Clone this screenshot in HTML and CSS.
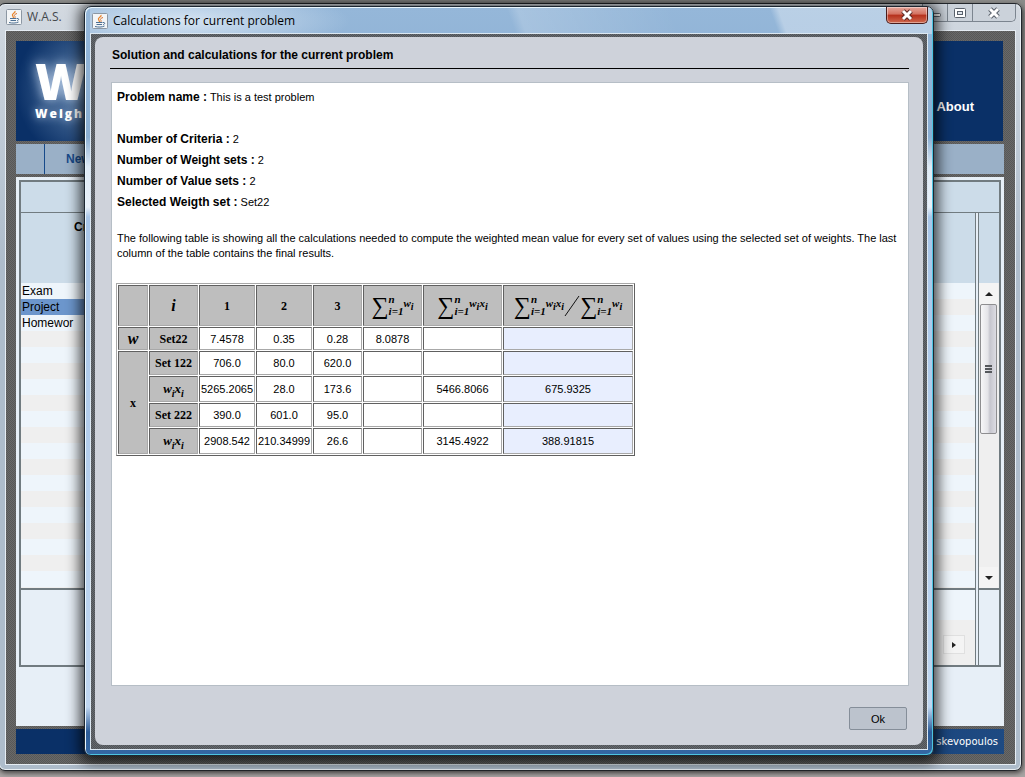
FILE: index.html
```html
<!DOCTYPE html>
<html lang="en">
<head>
  <meta charset="UTF-8">
  <meta name="viewport" content="width=device-width, initial-scale=1.0">
  <title>W.A.S.</title>
  <link rel="stylesheet" href="styles.css">
</head>
<body>

  <!-- java cup, used by both title bars -->
  <svg class="defs" width="0" height="0" aria-hidden="true">
    <symbol id="java" viewBox="0 0 16 16">
      <rect x="0.5" y="0.5" width="15" height="15" rx="1" fill="#f3f5f7" stroke="#8c97a3"/>
      <path d="M9 2 C10 4 5.500 4.500 6.500 6.500 C7 7.500 7.500 8 7.500 9" fill="none" stroke="#e8862e" stroke-width="1.300"/>
      <path d="M11 4.500 C8 5.500 8 6.500 9 7.500 C9.500 8 9 8.500 8.500 9" fill="none" stroke="#d9702a"/>
      <path d="M4 9.500 H10.500 M4.500 11.500 H10 M3 13.500 C6 14.300 10 14.300 12.500 13" fill="none" stroke="#4c6f93"/>
      <path d="M11 9.500 C13.500 9 13 11.500 11 11.700" fill="none" stroke="#4c6f93"/>
    </symbol>
  </svg>

  <div class="desktop">

    <div class="window main_win">
      <div class="titlebar">
        <svg class="java_icon"><use href="#java"/></svg>
        <span class="title">W.A.S.</span>
        <div class="win_btns">
          <button type="button" class="win_btn" aria-label="Minimize">
            <svg width="14" height="12"><rect x="1.500" y="6.500" width="11" height="3" rx="1" fill="#fff" stroke="#59616b"/></svg>
          </button>
          <button type="button" class="win_btn" aria-label="Maximize">
            <svg width="14" height="12"><rect x="1.500" y="1.500" width="11" height="9" rx="1" fill="#fff" stroke="#59616b"/><rect x="4.500" y="4.500" width="5" height="3" fill="#dfe5ec" stroke="#59616b"/></svg>
          </button>
          <button type="button" class="win_btn win_btn_x" aria-label="Close">
            <svg width="14" height="12"><path d="M3 2 L11 10 M11 2 L3 10" stroke="#59616b" stroke-width="5"/><path d="M3 2 L11 10 M11 2 L3 10" stroke="#fff" stroke-width="3"/></svg>
          </button>
        </div>
      </div>

      <div class="client">
        <div class="banner">
          <div class="logo">
            <span class="logo_big">W</span>
            <span class="logo_small">Weigh</span>
          </div>
          <a class="about" href="#">About</a>
        </div>

        <div class="nav">
          <a class="nav_item" href="#">New</a>
        </div>

        <div class="content">
          <div class="grid">
            <div class="grid_top"></div>
            <div class="grid_cols">
              <div class="grid_main">
                <div class="grid_head">Cr</div>
                <ul class="grid_list">
                  <li>Exam</li>
                  <li class="on">Project</li>
                  <li>Homewor</li>
                </ul>
                <div class="grid_foot">
                  <div class="hscroll">
                    <button type="button" class="arrow_btn" aria-label="Scroll right">
                      <svg width="8" height="8"><path d="M2 1 L6 4 L2 7 Z" fill="#222"/></svg>
                    </button>
                  </div>
                </div>
              </div>
              <div class="grid_side">
                <div class="side_head"></div>
                <div class="vscroll">
                  <button type="button" class="arrow" aria-label="Scroll up">
                    <svg width="8" height="8"><path d="M0 6 L4 2 L8 6 Z" fill="#222"/></svg>
                  </button>
                  <div class="thumb"><i></i><i></i><i></i></div>
                  <button type="button" class="arrow arrow_down" aria-label="Scroll down">
                    <svg width="8" height="8"><path d="M0 2 L4 6 L8 2 Z" fill="#222"/></svg>
                  </button>
                </div>
                <div class="side_foot"></div>
              </div>
            </div>
          </div>
        </div>

        <div class="footer">skevopoulos</div>
      </div>
    </div>

    <div class="window dialog">
      <div class="titlebar">
        <svg class="java_icon"><use href="#java"/></svg>
        <span class="title">Calculations for current problem</span>
        <button type="button" class="close" aria-label="Close">
          <svg width="14" height="12"><path d="M3 2 L11 10 M11 2 L3 10" stroke="#5c2a26" stroke-width="5"/><path d="M3 2 L11 10 M11 2 L3 10" stroke="#fff" stroke-width="3"/></svg>
        </button>
      </div>

      <div class="dialog_client">
        <div class="panel">
          <h1 class="heading">Solution and calculations for the current problem</h1>

          <div class="report">
            <p class="line line_name"><b>Problem name :</b> This is a test problem</p>
            <p class="line"><b>Number of Criteria :</b> 2</p>
            <p class="line"><b>Number of Weight sets :</b> 2</p>
            <p class="line"><b>Number of Value sets :</b> 2</p>
            <p class="line"><b>Selected Weigth set :</b> Set22</p>
            <p class="note">The following table is showing all the calculations needed to compute the weighted mean value for every set of values using the selected set of weights. The last column of the table contains the final results.</p>

            <table class="calc">
              <colgroup>
                <col class="c_group"><col class="c_name"><col class="c_num"><col class="c_num"><col class="c_name"><col class="c_sum"><col class="c_prod"><col class="c_mean">
              </colgroup>
              <tr class="r_head">
                <th></th>
                <th class="big"><i>i</i></th>
                <th>1</th>
                <th>2</th>
                <th>3</th>
                <th>
                  <span class="sum"><span class="sigma">∑</span><span class="lim"><i>n</i><i>i=1</i></span><i class="term">w<sub>i</sub></i></span>
                </th>
                <th>
                  <span class="sum"><span class="sigma">∑</span><span class="lim"><i>n</i><i>i=1</i></span><i class="term">w<sub>i</sub>x<sub>i</sub></i></span>
                </th>
                <th>
                  <span class="sum"><span class="sigma">∑</span><span class="lim"><i>n</i><i>i=1</i></span><i class="term">w<sub>i</sub>x<sub>i</sub></i><svg class="slash" width="16" height="22"><path d="M1 21 L15 1" stroke="#111"/></svg><span class="sigma">∑</span><span class="lim"><i>n</i><i>i=1</i></span><i class="term">w<sub>i</sub></i></span>
                </th>
              </tr>
              <tr class="r_w">
                <th class="big"><i>w</i></th>
                <th>Set22</th>
                <td>7.4578</td><td>0.35</td><td>0.28</td><td>8.0878</td><td></td><td class="res"></td>
              </tr>
              <tr class="r_set">
                <th rowspan="4">x</th>
                <th>Set 122</th>
                <td>706.0</td><td>80.0</td><td>620.0</td><td></td><td></td><td class="res"></td>
              </tr>
              <tr class="r_wx">
                <th><i class="wx">w<sub>i</sub>x<sub>i</sub></i></th>
                <td>5265.2065</td><td>28.0</td><td>173.6</td><td></td><td>5466.8066</td><td class="res">675.9325</td>
              </tr>
              <tr class="r_set">
                <th>Set 222</th>
                <td>390.0</td><td>601.0</td><td>95.0</td><td></td><td></td><td class="res"></td>
              </tr>
              <tr class="r_wx">
                <th><i class="wx">w<sub>i</sub>x<sub>i</sub></i></th>
                <td>2908.542</td><td>210.34999</td><td>26.6</td><td></td><td>3145.4922</td><td class="res">388.91815</td>
              </tr>
            </table>
          </div>

          <div class="actions">
            <button type="button" class="ok">Ok</button>
          </div>
        </div>
      </div>
    </div>

  </div>

</body>
</html>
```
FILE: styles.css
```css
*{
  box-sizing:border-box;
}

body{
  margin:0;
  font-family:"Liberation Sans", Arial, sans-serif;
  font-size:11px;
  color:#000;
}

a{
  text-decoration:none;
}

button{
  font-family:inherit;
  padding:0;
}

.defs{
  position:absolute;
}

.desktop{
  position:relative;
  min-height:100vh;
  background:linear-gradient(#8b8b89, #a8a4a3);
  overflow:hidden;
}

/* windows */

.window{
  position:absolute;
  display:flex;
  flex-direction:column;
}

.titlebar{
  display:flex;
  align-items:center;
  gap:5px;
  font-family:"Open Sans", "Noto Sans", sans-serif;
  font-size:12px;
}

.java_icon{
  width:16px;
  height:16px;
}

.title{
  flex:1;
  line-height:16px;
}

.main_win{
  left:-2px;
  right:3px;
  top:3px;
  bottom:6px;
  padding:0 5px 5px 6px;
  border:1px solid #22262b;
  border-radius:7px;
  background:linear-gradient(#d3d9e0, #c9d2dc 60px, #aebccb 260px, #aebccb);
  box-shadow:inset 0 0 0 1px #e9eef3, 1px 2px 5px rgba(0,0,0,.6);
}

.main_win .titlebar{
  height:26px;
  padding-left:1px;
  color:#45484c;
}

.win_btns{
  display:flex;
  align-self:flex-start;
  border:1px solid #7c858f;
  border-top:0;
  border-radius:0 0 5px 5px;
}

.win_btn{
  width:25px;
  height:17px;
  border:0;
  border-right:1px solid #7c858f;
  background:#cbd2da;
}

.win_btn_x{
  width:42px;
  border-right:0;
  border-radius:0 0 5px 0;
}

.win_btn svg{
  display:block;
  margin:auto;
}

.client{
  flex:1;
  display:flex;
  flex-direction:column;
  gap:3px;
  padding:10px 12px 10px 10px;
  border:1px solid #e6edf4;
  background:repeating-conic-gradient(#585858 0 25%, #696969 0 50%) 0 0 / 2px 2px;
}

.banner{
  display:flex;
  justify-content:space-between;
  height:100px;
  padding:20px 29px 0 19px;
  background:radial-gradient(circle at 75px 48px, #6688b0, #0a3067 75px);
  color:#fff;
}

.logo{
  display:flex;
  flex-direction:column;
}

.logo_big{
  font:800 50px/40px "Open Sans", sans-serif;
  text-shadow:0 0 12px #bcd0ea;
}

.logo_small{
  margin-top:4px;
  font:800 12px/18px "Open Sans", sans-serif;
  letter-spacing:2px;
  text-shadow:0 0 8px #9fb8d8;
}

.about{
  padding-top:38px;
  font:bold 13px/16px "Liberation Sans", sans-serif;
  color:#fff;
}

.nav{
  height:30px;
  margin-right:-1px;
  padding-left:28px;
  background:#9ab0c7;
}

.nav_item{
  display:block;
  padding-left:21px;
  border-left:1px solid #174a8a;
  font-size:12px;
  font-weight:bold;
  line-height:30px;
  color:#174a8a;
}

.content{
  flex:1;
  display:flex;
  margin-right:-1px;
  padding:3px 3px 59px;
  background:#e7eff7;
}

.grid{
  flex:1;
  display:flex;
  flex-direction:column;
  border:2px solid #717b80;
}

.grid_top{
  height:31px;
  border-bottom:1px solid #717b80;
  background:#ccdce9;
}

.grid_cols{
  flex:1;
  display:flex;
  gap:2px;
}

.grid_main,
.grid_side{
  display:flex;
  flex-direction:column;
}

.grid_main{
  flex:1;
  border-right:1px solid #717b80;
}

.grid_side{
  width:21px;
  border-left:1px solid #717b80;
}

.grid_head,
.side_head{
  height:70px;
  background:#ccdce9;
}

.grid_head{
  padding:6px 0 0 53px;
  font-size:12px;
  font-weight:bold;
  line-height:16px;
}

.grid_list{
  flex:1;
  margin:0;
  padding:0;
  list-style:none;
  font-size:12px;
  line-height:16px;
  background:repeating-linear-gradient(#eef5fb 0 16px, #efefef 16px 32px);
}

.grid_list li{
  width:80px;
  padding-left:1px;
}

.grid_list .on{
  background:#6c96cc;
}

.grid_foot,
.side_foot{
  height:77px;
  border-top:2px solid #717b80;
}

.grid_foot{
  display:flex;
  align-items:flex-end;
  justify-content:flex-end;
  background:linear-gradient(90deg, #e7eff7 50%, #eef5fb 50%);
}

.hscroll{
  width:50%;
  display:flex;
  justify-content:flex-end;
  height:45px;
  padding:15px 10px 0 0;
  background:#efefef;
}

.arrow_btn{
  width:22px;
  height:19px;
  border:1px solid #e0e0e0;
  background:#f4f4f4;
}

.vscroll{
  flex:1;
  display:flex;
  flex-direction:column;
  padding-right:1px;
  background:#efefef;
}

.arrow{
  height:21px;
  border:0;
  background:#f4f4f4;
}

.arrow_down{
  margin-top:auto;
}

.thumb{
  display:flex;
  flex-direction:column;
  justify-content:center;
  align-items:center;
  gap:1px;
  height:130px;
  margin:0 1px;
  border:1px solid #8e8e90;
  border-radius:2px;
  background:linear-gradient(90deg, #f7f7f8, #e4e4e8 45%, #c6c6ce 60%, #dcdce2);
}

.thumb i{
  width:7px;
  height:2px;
  background:#55585c;
}

.footer{
  height:25px;
  margin-right:-1px;
  padding-right:6px;
  background:linear-gradient(90deg, #0a3067 40%, #1e4a82);
  color:#fff;
  font-family:"DejaVu Sans", sans-serif;
  font-size:10px;
  line-height:25px;
  text-align:right;
}

/* calculations dialog */

.dialog{
  left:84px;
  right:91px;
  top:6px;
  bottom:21px;
  padding:1px 5px 5px;
  border:1px solid #1d2731;
  border-radius:7px;
  background:
    linear-gradient(70deg, transparent 405px, rgba(255,255,255,.18) 415px, transparent 560px, transparent 652px, rgba(255,255,255,.35) 660px) 0 0 / 100% 27px no-repeat,
    linear-gradient(#95b7d9, #8aaed2 130px, #dfeaf5 160px, #e8f0f8 200px, #a9c6e8 210px, #bfd6f0 700px, #2c5c98 725px, #3568a4);
  box-shadow:inset 1px 1px 0 #eaf6fd, inset -1px -1px 0 #4cc3e0, 0 2px 14px 4px rgba(0,0,0,.75);
}

.dialog .titlebar{
  height:25px;
  padding-left:2px;
  background:radial-gradient(ellipse 170px 34px at 90px 13px, rgba(225,236,247,.85), transparent);
}

.close{
  align-self:flex-start;
  width:42px;
  height:17px;
  margin-top:-1px;
  border:1px solid #4a1d1c;
  border-top:0;
  border-radius:0 0 5px 5px;
  background:linear-gradient(#e5a79c, #d3705f 45%, #b52f1c 50%, #cf6a50);
  box-shadow:inset 0 0 0 1px rgba(255,255,255,.4);
}

.close svg{
  display:block;
  margin:auto;
}

.dialog_client{
  flex:1;
  display:flex;
  padding:3px 4px 4px;
  border:1px solid #dce8f2;
  background:repeating-conic-gradient(#4f5358 0 25%, #666a6e 0 50%) 0 0 / 2px 2px;
}

.panel{
  flex:1;
  display:flex;
  flex-direction:column;
  padding:10px 14px 15px 15px;
  border-radius:8px;
  background:#ced2da;
}

.heading{
  margin:0 0 13px;
  padding:0 2px 4px;
  border-bottom:1px solid #000;
  font-size:12px;
  line-height:17px;
}

.report{
  flex:1;
  margin-left:1px;
  padding:4px 5px;
  border:1px solid #b6bec6;
  background:#fff;
}

.line{
  margin:0;
  line-height:21px;
}

.line b{
  font-size:12px;
}

.line_name{
  margin-bottom:21px;
}

.note{
  margin:18px 0 22px;
  line-height:15px;
}

.calc{
  width:519px;
  margin-left:-1px;
  table-layout:fixed;
  border:1px solid;
  border-color:#a8a8a8 #606060 #606060 #a8a8a8;
  border-spacing:1px;
  line-height:14px;
}

.c_group{ width:30px; }
.c_name{ width:49px; }
.c_num{ width:56px; }
.c_sum{ width:59px; }
.c_prod{ width:79px; }
.c_mean{ width:130px; }

.r_head{ height:41px; }
.r_w{ height:23px; }
.r_set{ height:24px; }
.r_wx{ height:26px; }

.calc th,
.calc td{
  padding:0;
  border:1px solid;
  border-color:#606060 #a8a8a8 #a8a8a8 #606060;
  text-align:center;
  white-space:nowrap;
}

.calc th{
  background:#bebebe;
  font-family:"Liberation Serif", "Times New Roman", serif;
  font-size:12px;
}

.calc .big{
  font-size:16px;
}

.calc .res{
  background:#e8eefe;
}

.wx{
  font-size:13px;
}

.wx sub{
  font-size:10px;
  line-height:1px;
}

.sum{
  display:flex;
  justify-content:center;
  align-items:center;
}

.sigma{
  font-size:24px;
  font-weight:normal;
  line-height:24px;
}

.lim{
  display:flex;
  flex-direction:column;
  gap:3px;
  text-align:left;
  font-size:11px;
  line-height:9px;
}

.term{
  padding-bottom:5px;
  font-size:11px;
  line-height:12px;
}

.term sub{
  font-size:10px;
  line-height:1px;
}

.ok{
  width:58px;
  height:23px;
  border:1px solid #858e99;
  border-radius:2px;
  background:#bcc3cd;
  font-size:11px;
}

.actions{
  display:flex;
  justify-content:flex-end;
  padding:21px 2px 0 0;
}
```
